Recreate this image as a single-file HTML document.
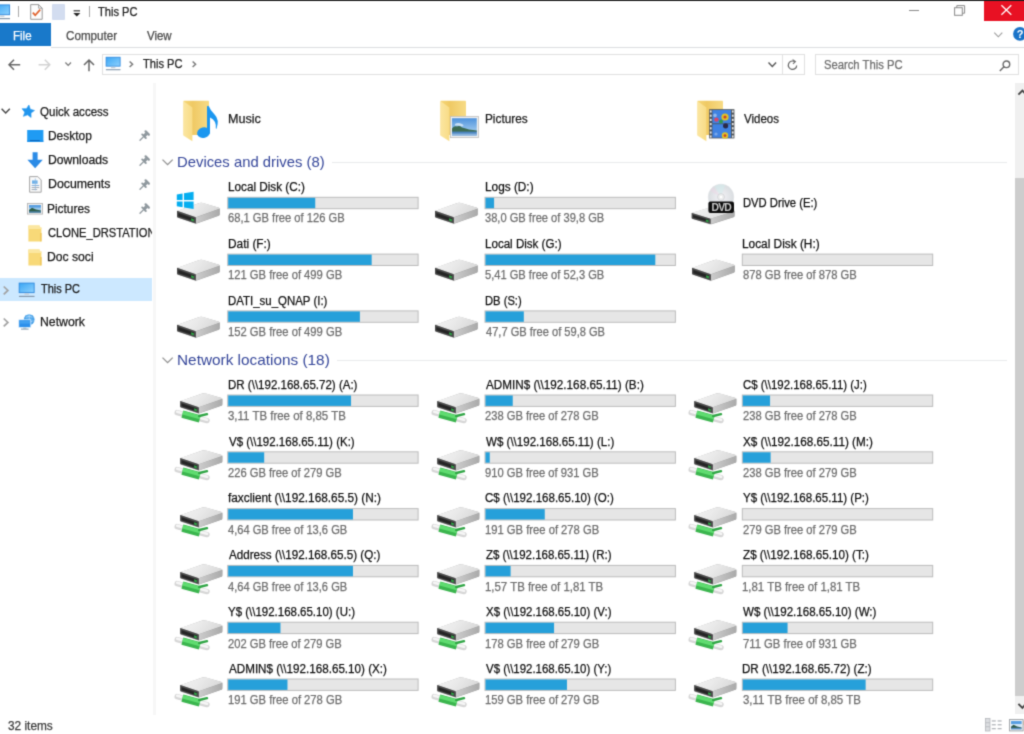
<!DOCTYPE html>
<html><head><meta charset="utf-8"><title>This PC</title>
<style>
html,body{margin:0;padding:0;background:#fff;}
body{position:relative;width:1024px;height:734px;overflow:hidden;font-family:"Liberation Sans",sans-serif;}
#root{filter:url(#pgblur);position:absolute;left:-10px;top:-10px;width:1044px;height:754px;background:#fff;}
#in{position:absolute;left:10px;top:10px;width:1024px;height:734px;}
.t{-webkit-text-stroke:0.25px;position:absolute;white-space:pre;line-height:1;transform-origin:0 50%;font-family:"Liberation Sans",sans-serif;}
.r{position:absolute;}
.ic{position:absolute;overflow:visible;}
.bar{position:absolute;width:189.4px;height:10.4px;border:1px solid #bcbcbc;background:#e6e6e6;}
.bar i{display:block;height:100%;background:#26a0da;}

</style></head>
<body>
<svg width="0" height="0" style="position:absolute">
<defs>
<filter id="pgblur" x="0" y="0" width="100%" height="100%" color-interpolation-filters="sRGB"><feConvolveMatrix order="3" kernelMatrix="0.0256 0.1088 0.0256 0.1088 0.4624 0.1088 0.0256 0.1088 0.0256" divisor="1" edgeMode="duplicate" preserveAlpha="true"/></filter>
<linearGradient id="gScr" x1="0" y1="0" x2="1" y2="1"><stop offset="0" stop-color="#3aa6f4"/><stop offset="1" stop-color="#8ed1fd"/></linearGradient>
<linearGradient id="gTop" x1="0" y1="0" x2="1" y2="0.3"><stop offset="0" stop-color="#f3f3f3"/><stop offset="0.5" stop-color="#eaeaea"/><stop offset="1" stop-color="#dadada"/></linearGradient>
<linearGradient id="gSide" x1="0" y1="0" x2="1" y2="0"><stop offset="0" stop-color="#cccccc"/><stop offset="1" stop-color="#aaaaaa"/></linearGradient>
<linearGradient id="gFoldB" x1="0" y1="0" x2="1" y2="0"><stop offset="0" stop-color="#f6d777"/><stop offset="0.36" stop-color="#efc964"/><stop offset="1" stop-color="#f7db85"/></linearGradient>
<linearGradient id="gFoldF" x1="0" y1="0" x2="1" y2="0"><stop offset="0" stop-color="#fbe6a2"/><stop offset="1" stop-color="#f8dc86"/></linearGradient>
<linearGradient id="gSky" x1="0" y1="0" x2="0" y2="1"><stop offset="0" stop-color="#4f93dc"/><stop offset="1" stop-color="#b5d8f3"/></linearGradient>
<radialGradient id="gDisc" cx="0.5" cy="0.5" r="0.5"><stop offset="0" stop-color="#f4f4f4"/><stop offset="0.22" stop-color="#d8d8dc"/><stop offset="0.3" stop-color="#ececf0"/><stop offset="1" stop-color="#d9dde0"/></radialGradient>

<symbol id="pc" viewBox="0 0 18 16" overflow="visible">
  <rect x="1.2" y="0.9" width="15.4" height="9.8" fill="url(#gScr)" stroke="#2b86dc" stroke-width="0.9"/>
  <rect x="6.6" y="11.4" width="4.8" height="1.5" fill="#c3ccd6"/>
  <rect x="1" y="14" width="16" height="1.2" fill="#8296aa"/>
</symbol>
<symbol id="qcheck" viewBox="0 0 13 16" overflow="visible">
  <path d="M0.7 0.6H8.6L12.2 4.2V15.3H0.7z" fill="#fdfdfd" stroke="#8d8d8d" stroke-width="0.9"/>
  <path d="M8.6 0.6V4.2H12.2" fill="none" stroke="#8d8d8d" stroke-width="0.8"/>
  <path d="M2.8 8.6L5.2 11.2L10.2 5.6" fill="none" stroke="#e0632e" stroke-width="1.7"/>
</symbol>
<symbol id="star" viewBox="0 0 14 13" overflow="visible">
  <path d="M7.92 0.06L9.29 4.23L13.50 5.45L9.97 8.05L10.10 12.43L6.54 9.87L2.42 11.35L3.75 7.17L1.07 3.71L5.45 3.69z" fill="#2196ee" stroke="#2196ee" stroke-width="0.6" stroke-linejoin="round"/>
</symbol>
<symbol id="desk" viewBox="0 0 17 12" overflow="visible">
  <rect x="0.2" y="0" width="16.2" height="11.8" fill="#1f9bf3"/>
  <rect x="0.2" y="10.6" width="16.2" height="1.2" fill="#1a8be6"/>
  <rect x="3" y="10" width="9.8" height="0.9" fill="#0c63b6"/>
</symbol>
<symbol id="dl" viewBox="0 0 17 17" overflow="visible">
  <path d="M5.6 0.2H10.6V7.8H15.8L8.1 16.2L0.4 7.8H5.6z" fill="#2b8be6"/>
</symbol>
<symbol id="docs" viewBox="0 0 13 17" overflow="visible">
  <path d="M0.6 0.6H8.8L12.2 4V16.2H0.6z" fill="#fafafa" stroke="#9a9a9a" stroke-width="0.9"/>
  <rect x="3" y="4.4" width="5.6" height="3.4" fill="#6eb1ea"/>
  <rect x="2.6" y="9" width="7.6" height="0.9" fill="#7aa7d6"/>
  <rect x="2.6" y="11" width="7.6" height="0.9" fill="#9aa4b0"/>
  <rect x="2.6" y="13" width="5.6" height="0.9" fill="#9aa4b0"/>
  <rect x="5.8" y="2.4" width="1" height="12" fill="#8fb7de" opacity="0.7"/>
</symbol>
<symbol id="pics" viewBox="0 0 16 12" overflow="visible">
  <rect x="0.5" y="0.5" width="15" height="10.6" fill="#f2f2f2" stroke="#b4b4b4" stroke-width="0.9"/>
  <rect x="2" y="2" width="12" height="7.6" fill="#9cc9ee"/>
  <rect x="2" y="2" width="12" height="2.6" fill="#5a9fe0"/>
  <path d="M2 7L5 4.8L9 6.6L14 7.4V9.6H2z" fill="#2e5d47"/>
  <rect x="2" y="8.4" width="12" height="1.2" fill="#4f86b8"/>
</symbol>
<symbol id="fold" viewBox="0 0 14 17" overflow="visible">
  <path d="M0.4 0.6H11.6V2.6H13.4V16.4H0.4z" fill="#f8d978"/>
  <path d="M0.4 0.6H11.6V2.6H13.4V4H0.4z" fill="#fbe7a1"/>
  <rect x="12.2" y="8" width="1.4" height="8.4" fill="#eec55a"/>
</symbol>
<symbol id="pin" viewBox="0 0 11 11" overflow="visible">
  <g stroke="#8f989e" fill="none" stroke-linecap="round">
  <path d="M6.6 1.4L9.8 4.6" stroke-width="2.3"/>
  <path d="M7.6 3.6L5 6.2" stroke-width="3.2" stroke-linecap="butt"/>
  <path d="M3.2 4.4L6.8 8" stroke-width="1.9"/>
  <path d="M4.6 6.6L1 10.2" stroke-width="1.3"/>
  </g>
</symbol>
<symbol id="netw" viewBox="0 0 17 16" overflow="visible">
  <circle cx="11.2" cy="5.6" r="5.4" fill="#55acef"/>
  <path d="M7 3.4Q11 1.4 15.6 3.4M6.4 7Q11 9.2 16.4 6.6M11.2 0.4V11" stroke="#bfe0fa" stroke-width="0.7" fill="none"/>
  <path d="M8 1.2Q5.4 5.6 8 10.4M14.2 1.2Q16.8 5.6 14.2 10" stroke="#3b8fd8" stroke-width="0.6" fill="none"/>
  <rect x="0.8" y="5.8" width="12" height="7.6" fill="#2d90ec" stroke="#e4f2fd" stroke-width="0.7"/>
  <rect x="1.6" y="6.6" width="10.4" height="3" fill="#4aa6f4" opacity="0.7"/>
  <rect x="5.2" y="13.6" width="3.2" height="1" fill="#9fb4c6"/>
  <rect x="3" y="14.6" width="7.6" height="1" fill="#8298ad"/>
</symbol>

<symbol id="bigfold" viewBox="0 0 27 42" overflow="visible">
  <path d="M0.6 0.7H25.2Q26 0.7 26 1.5V35H0.6z" fill="url(#gFoldB)"/>
  <path d="M0.3 1L9.4 7.4V41.2L0.3 35.6z" fill="url(#gFoldF)"/>
  
</symbol>
<symbol id="note" viewBox="0 0 20 36" overflow="visible">
  <ellipse cx="3.6" cy="28.6" rx="6.6" ry="5.2" transform="rotate(-14 3.6 28.6)" fill="#1b97f0"/>
  <path d="M7 2.4Q8.2 1.2 9 2.6Q10.2 6.4 14.6 10.4Q19.6 15.4 16.6 24.4Q16.2 25.4 15.8 24.2Q16.6 16.4 10 13.4V29.4H7z" fill="#1b97f0"/>
</symbol>
<symbol id="photo" viewBox="0 0 29 22" overflow="visible">
  <rect x="0.4" y="0.4" width="28" height="21.2" fill="#f1f1f1" stroke="#bdbdbd" stroke-width="0.8"/>
  <rect x="2" y="2.2" width="24.8" height="17.2" fill="url(#gSky)"/>
  <path d="M2 12.4Q4 9.6 7 10.4Q9.6 9.4 12 11.4Q16 12.4 19 13.4Q23 13.6 26.8 14.6V16H2z" fill="#3c6b52"/>
  <path d="M5 8Q8 6 12 8Q15 9.6 12 10.4Q9 9.4 5 9.6z" fill="#e6f1fa" opacity="0.75"/>
  <rect x="2" y="15.6" width="24.8" height="3.8" fill="#4d86c2"/>
  <rect x="2" y="17.6" width="24.8" height="1.8" fill="#8ab4dc"/>
</symbol>
<symbol id="film" viewBox="0 0 26 30" overflow="visible">
  <rect x="0.2" y="0.2" width="25.2" height="29.2" fill="#4c5258"/>
  <rect x="3.4" y="1" width="18.6" height="13.4" fill="#3f82e2"/>
  <rect x="3.4" y="15.2" width="18.6" height="13.4" fill="#3f82e2"/>
  <g fill="#e8e8e8"><rect x="0.9" y="1.4" width="1.7" height="2.2"/><rect x="0.9" y="5.6" width="1.7" height="2.2"/><rect x="0.9" y="9.8" width="1.7" height="2.2"/><rect x="0.9" y="14" width="1.7" height="2.2"/><rect x="0.9" y="18.2" width="1.7" height="2.2"/><rect x="0.9" y="22.4" width="1.7" height="2.2"/><rect x="0.9" y="26.4" width="1.7" height="2.2"/>
  <rect x="22.9" y="1.4" width="1.7" height="2.2"/><rect x="22.9" y="5.6" width="1.7" height="2.2"/><rect x="22.9" y="9.8" width="1.7" height="2.2"/><rect x="22.9" y="14" width="1.7" height="2.2"/><rect x="22.9" y="18.2" width="1.7" height="2.2"/><rect x="22.9" y="22.4" width="1.7" height="2.2"/><rect x="22.9" y="26.4" width="1.7" height="2.2"/></g>
  <circle cx="16" cy="8" r="3.6" fill="#e2c324"/><circle cx="16" cy="8" r="1.6" fill="#c8402a"/>
  <circle cx="7.4" cy="10.6" r="2.2" fill="#d8486a"/><circle cx="12" cy="12.4" r="2" fill="#2f9a4e"/>
  <circle cx="16.6" cy="16.8" r="2.6" fill="#2a2a48"/><circle cx="16" cy="26.4" r="3.2" fill="#e2c324"/><circle cx="16" cy="26.6" r="1.4" fill="#c8402a"/>
  <circle cx="6" cy="6.4" r="1.8" fill="#8fb8ee"/><circle cx="7" cy="25" r="1.6" fill="#79a8ea"/>
</symbol>

<symbol id="hdd" viewBox="0 0 45 23" overflow="visible" preserveAspectRatio="none">
  <path d="M1.1 9.3L23.6 1.1Q25.2 0.5 26.8 1L43.2 6Q44.2 6.4 44.1 7.4L44 13Q44 13.8 43.1 14.2L21 22.3Q20 22.7 19 22.3L1.9 16.3Q1 16 1 15z" fill="#a2a2a2"/>
  <path d="M1.2 9L23.6 1Q25.2 0.4 26.8 0.9L43.4 6Q44.4 6.5 43.4 7L20.6 15.6Q19.9 15.8 19.2 15.6z" fill="url(#gTop)"/>
  <path d="M20 15.9L44 7.1V12.6Q44 13.4 43.1 13.8L20 22.2z" fill="url(#gSide)"/>
  <path d="M1 9.1L19.2 15.6Q20 15.9 20 16.8V22.2L1.8 15.9Q1 15.6 1 14.7z" fill="#4a4a4a"/>
  <path d="M2.4 11.4L18.2 17V20.2L2.4 14.6z" fill="#242424"/>
  <path d="M15.2 16.8L18 17.8V20.2L15.2 19.2z" fill="#2fa446"/>
</symbol>
<symbol id="win" viewBox="0 0 19 19" overflow="visible">
  <path d="M0.8 3.6L6.6 2.6V9H0.8z M8 2.3L17.6 0.8V9H8z M0.8 10.4H6.6V16.2L0.8 15.2z M8 10.4H17.6V18L8 16.4z" fill="#05aef0"/>
</symbol>
<symbol id="dvd" viewBox="0 0 46 43" overflow="visible">
  <g transform="translate(-0.3 22.2) scale(0.995 0.85)"><use href="#hdd" width="45" height="23"/></g>
  <circle cx="30" cy="14" r="12.8" fill="url(#gDisc)" stroke="#dfe3e6" stroke-width="0.6"/>
  <path d="M30 14L24 3.2A12.4 12.4 0 0 1 34 2.2z" fill="#d4ecec" opacity="0.55"/>
  <path d="M30 14L19 8A12.4 12.4 0 0 1 22 4.2z" fill="#ecd8e6" opacity="0.5"/>
  <circle cx="30" cy="14" r="3.4" fill="#eeeeee" stroke="#cfd3d6" stroke-width="0.8"/>
  <circle cx="30" cy="14" r="1.3" fill="#fff"/>
  <rect x="17.4" y="18.4" width="25.6" height="11.6" rx="2" fill="#0d0d0d"/>
  <text x="30.2" y="27.9" text-anchor="middle" font-family="Liberation Sans" font-weight="bold" font-size="10.4" letter-spacing="-0.9" fill="#c9c9c9">DVD</text>
</symbol>
<symbol id="net" viewBox="0 0 50 34" overflow="visible">
  <path d="M3.2 20.6L33 28.6" stroke="#d6d6d6" stroke-width="5.4" stroke-linecap="round" fill="none"/>
  <path d="M3.2 19.8L33 27.8" stroke="#f6f6f6" stroke-width="2.6" stroke-linecap="round" fill="none"/>
  <path d="M8.4 22.2L25.8 26.8" stroke="#3bb54e" stroke-width="7.6" fill="none"/>
  <path d="M8.8 20.8L26.2 25.4" stroke="#5fdc70" stroke-width="3.6" fill="none"/>
  <path d="M25.2 24L33 22.2" stroke="#2fa544" stroke-width="2.4" stroke-linecap="round" fill="none"/>
  <g transform="translate(5.2 0.5) scale(0.98 0.935)"><use href="#hdd" width="45" height="23"/></g>
</symbol>
</defs>
</svg>

<div id="root"><div id="in">
<svg class="ic" style="left:0;top:0" width="1024" height="734">
<rect x="227.20" y="196.80" width="191.4" height="12.4" fill="#bcbcbc"/><rect x="228.20" y="197.80" width="189.40" height="10.40" fill="#e6e6e6"/><rect x="228.20" y="197.80" width="87.03" height="10.40" fill="#26a0da"/>
<rect x="484.50" y="196.80" width="191.4" height="12.4" fill="#bcbcbc"/><rect x="485.50" y="197.80" width="189.40" height="10.40" fill="#e6e6e6"/><rect x="485.50" y="197.80" width="8.57" height="10.40" fill="#26a0da"/>
<rect x="227.20" y="253.60" width="191.4" height="12.4" fill="#bcbcbc"/><rect x="228.20" y="254.60" width="189.40" height="10.40" fill="#e6e6e6"/><rect x="228.20" y="254.60" width="143.47" height="10.40" fill="#26a0da"/>
<rect x="484.50" y="253.60" width="191.4" height="12.4" fill="#bcbcbc"/><rect x="485.50" y="254.60" width="189.40" height="10.40" fill="#e6e6e6"/><rect x="485.50" y="254.60" width="169.81" height="10.40" fill="#26a0da"/>
<rect x="741.80" y="253.60" width="191.4" height="12.4" fill="#bcbcbc"/><rect x="742.80" y="254.60" width="189.40" height="10.40" fill="#e6e6e6"/>
<rect x="227.20" y="310.40" width="191.4" height="12.4" fill="#bcbcbc"/><rect x="228.20" y="311.40" width="189.40" height="10.40" fill="#e6e6e6"/><rect x="228.20" y="311.40" width="131.71" height="10.40" fill="#26a0da"/>
<rect x="484.50" y="310.40" width="191.4" height="12.4" fill="#bcbcbc"/><rect x="485.50" y="311.40" width="189.40" height="10.40" fill="#e6e6e6"/><rect x="485.50" y="311.40" width="38.32" height="10.40" fill="#26a0da"/>
<rect x="227.20" y="394.50" width="191.4" height="12.4" fill="#bcbcbc"/><rect x="228.20" y="395.50" width="189.40" height="10.40" fill="#e6e6e6"/><rect x="228.20" y="395.50" width="122.84" height="10.40" fill="#26a0da"/>
<rect x="484.50" y="394.50" width="191.4" height="12.4" fill="#bcbcbc"/><rect x="485.50" y="395.50" width="189.40" height="10.40" fill="#e6e6e6"/><rect x="485.50" y="395.50" width="27.25" height="10.40" fill="#26a0da"/>
<rect x="741.80" y="394.50" width="191.4" height="12.4" fill="#bcbcbc"/><rect x="742.80" y="395.50" width="189.40" height="10.40" fill="#e6e6e6"/><rect x="742.80" y="395.50" width="27.25" height="10.40" fill="#26a0da"/>
<rect x="227.20" y="451.30" width="191.4" height="12.4" fill="#bcbcbc"/><rect x="228.20" y="452.30" width="189.40" height="10.40" fill="#e6e6e6"/><rect x="228.20" y="452.30" width="35.98" height="10.40" fill="#26a0da"/>
<rect x="484.50" y="451.30" width="191.4" height="12.4" fill="#bcbcbc"/><rect x="485.50" y="452.30" width="189.40" height="10.40" fill="#e6e6e6"/><rect x="485.50" y="452.30" width="4.27" height="10.40" fill="#26a0da"/>
<rect x="741.80" y="451.30" width="191.4" height="12.4" fill="#bcbcbc"/><rect x="742.80" y="452.30" width="189.40" height="10.40" fill="#e6e6e6"/><rect x="742.80" y="452.30" width="27.83" height="10.40" fill="#26a0da"/>
<rect x="227.20" y="508.10" width="191.4" height="12.4" fill="#bcbcbc"/><rect x="228.20" y="509.10" width="189.40" height="10.40" fill="#e6e6e6"/><rect x="228.20" y="509.10" width="124.78" height="10.40" fill="#26a0da"/>
<rect x="484.50" y="508.10" width="191.4" height="12.4" fill="#bcbcbc"/><rect x="485.50" y="509.10" width="189.40" height="10.40" fill="#e6e6e6"/><rect x="485.50" y="509.10" width="59.27" height="10.40" fill="#26a0da"/>
<rect x="741.80" y="508.10" width="191.4" height="12.4" fill="#bcbcbc"/><rect x="742.80" y="509.10" width="189.40" height="10.40" fill="#e6e6e6"/>
<rect x="227.20" y="564.90" width="191.4" height="12.4" fill="#bcbcbc"/><rect x="228.20" y="565.90" width="189.40" height="10.40" fill="#e6e6e6"/><rect x="228.20" y="565.90" width="124.78" height="10.40" fill="#26a0da"/>
<rect x="484.50" y="564.90" width="191.4" height="12.4" fill="#bcbcbc"/><rect x="485.50" y="565.90" width="189.40" height="10.40" fill="#e6e6e6"/><rect x="485.50" y="565.90" width="25.11" height="10.40" fill="#26a0da"/>
<rect x="741.80" y="564.90" width="191.4" height="12.4" fill="#bcbcbc"/><rect x="742.80" y="565.90" width="189.40" height="10.40" fill="#e6e6e6"/>
<rect x="227.20" y="621.70" width="191.4" height="12.4" fill="#bcbcbc"/><rect x="228.20" y="622.70" width="189.40" height="10.40" fill="#e6e6e6"/><rect x="228.20" y="622.70" width="52.27" height="10.40" fill="#26a0da"/>
<rect x="484.50" y="621.70" width="191.4" height="12.4" fill="#bcbcbc"/><rect x="485.50" y="622.70" width="189.40" height="10.40" fill="#e6e6e6"/><rect x="485.50" y="622.70" width="68.56" height="10.40" fill="#26a0da"/>
<rect x="741.80" y="621.70" width="191.4" height="12.4" fill="#bcbcbc"/><rect x="742.80" y="622.70" width="189.40" height="10.40" fill="#e6e6e6"/><rect x="742.80" y="622.70" width="44.76" height="10.40" fill="#26a0da"/>
<rect x="227.20" y="678.50" width="191.4" height="12.4" fill="#bcbcbc"/><rect x="228.20" y="679.50" width="189.40" height="10.40" fill="#e6e6e6"/><rect x="228.20" y="679.50" width="59.27" height="10.40" fill="#26a0da"/>
<rect x="484.50" y="678.50" width="191.4" height="12.4" fill="#bcbcbc"/><rect x="485.50" y="679.50" width="189.40" height="10.40" fill="#e6e6e6"/><rect x="485.50" y="679.50" width="81.46" height="10.40" fill="#26a0da"/>
<rect x="741.80" y="678.50" width="191.4" height="12.4" fill="#bcbcbc"/><rect x="742.80" y="679.50" width="189.40" height="10.40" fill="#e6e6e6"/><rect x="742.80" y="679.50" width="122.84" height="10.40" fill="#26a0da"/>
</svg>
<div class="r" style="left:-10px;top:-10px;width:1044px;height:11.2px;background:#1b1b1b"></div>
<svg class="ic" style="left:-7.50px;top:3.50px" width="18" height="16"><use href="#pc"/></svg>
<div class="r" style="left:17.8px;top:5.7px;width:1px;height:11px;background:#a8a8a8"></div>
<svg class="ic" style="left:29.50px;top:3.80px" width="13" height="16"><use href="#qcheck"/></svg>
<div class="r" style="left:52px;top:4.4px;width:12.7px;height:15.3px;background:#d3ddf0;border-radius:1px"></div>
<svg class="ic" style="left:73px;top:9.5px" width="8" height="7"><rect x="0.6" y="0.3" width="6.4" height="1.1" fill="#222"/><path d="M0.3 2.9h7L3.8 6.6z" fill="#222"/></svg>
<div class="r" style="left:88.5px;top:5.7px;width:1px;height:11px;background:#a8a8a8"></div>
<div class="r" style="left:908.8px;top:10px;width:10.6px;height:1px;background:#8a8a8a"></div>
<svg class="ic" style="left:953.8px;top:4.6px" width="12" height="11" fill="none" stroke="#888" stroke-width="1"><path d="M2.8 2.6V0.6h7.8v7.6H8.4"/><rect x="0.6" y="2.7" width="7.7" height="7.6"/></svg>
<div class="r" style="left:984px;top:1px;width:50px;height:19.8px;background:#e81123"></div>
<svg class="ic" style="left:1001px;top:5px" width="11" height="10" stroke="#fff" stroke-width="1.25"><path d="M0.4 0.2L10.3 9.8M10.3 0.2L0.4 9.8"/></svg>
<div class="r" style="left:-10px;top:23.4px;width:60.8px;height:23px;background:#1979ca"></div>
<div class="r" style="left:51px;top:46.6px;width:983px;height:1px;background:#dcdde0"></div>
<svg class="ic" style="left:994px;top:31.5px" width="9" height="6" fill="none" stroke="#9a9a9a" stroke-width="1.1"><path d="M0.3 0.6L4.3 4.8L8.3 0.6"/></svg>
<svg class="ic" style="left:1013px;top:27.4px" width="14" height="14"><circle cx="7" cy="6.9" r="6.9" fill="#1a73c8"/><text x="7" y="11" text-anchor="middle" font-family="Liberation Sans" font-weight="bold" font-size="11" fill="#fff">?</text></svg>
<svg class="ic" style="left:7.5px;top:59px" width="13" height="12" fill="none" stroke="#666" stroke-width="1.5"><path d="M12.2 5.8H1.2M6 0.8L1 5.8L6 10.8"/></svg>
<svg class="ic" style="left:37.5px;top:59px" width="13" height="12" fill="none" stroke="#d2d2d2" stroke-width="1.5"><path d="M0.6 5.8H11.6M6.8 0.8L11.8 5.8L6.8 10.8"/></svg>
<svg class="ic" style="left:64.5px;top:62px" width="7" height="5" fill="none" stroke="#777" stroke-width="1.2"><path d="M0.4 0.5L3.2 3.3L6 0.5"/></svg>
<svg class="ic" style="left:82.5px;top:58.6px" width="12" height="13" fill="none" stroke="#666" stroke-width="1.5"><path d="M6 12.2V1.2M1 6L6 1L11 6"/></svg>
<div class="r" style="left:101.5px;top:54px;width:703px;height:21.2px;border:1px solid #e0e0e0;box-sizing:border-box"></div>
<svg class="ic" style="left:104.50px;top:56.40px" width="16.4" height="15.4"><use href="#pc"/></svg>
<svg class="ic" style="left:128.5px;top:61px" width="5" height="7" fill="none" stroke="#777" stroke-width="1.4"><path d="M0.6 0.5L3.6 3.2L0.6 5.9"/></svg>
<svg class="ic" style="left:192px;top:61px" width="5" height="7" fill="none" stroke="#777" stroke-width="1.4"><path d="M0.6 0.5L3.6 3.2L0.6 5.9"/></svg>
<svg class="ic" style="left:767.6px;top:62.2px" width="9" height="6" fill="none" stroke="#555" stroke-width="1.4"><path d="M0.5 0.6L4.3 4.4L8.1 0.6"/></svg>
<div class="r" style="left:782px;top:54.5px;width:1px;height:19.6px;background:#e2e2e2"></div>
<svg class="ic" style="left:787px;top:58.6px" width="12" height="12" fill="none" stroke="#666" stroke-width="1.2"><path d="M7.6 2.6A4.2 4.2 0 1 0 9.7 6.4"/><path d="M5.6 0.6L8.4 2.6L6 4.8" stroke-width="1.1"/></svg>
<div class="r" style="left:815px;top:54px;width:203.6px;height:21.2px;border:1px solid #e0e0e0;box-sizing:border-box"></div>
<svg class="ic" style="left:998.5px;top:60px" width="12" height="12" fill="none" stroke="#666" stroke-width="1.4"><circle cx="7.4" cy="4.3" r="3.3"/><path d="M5.2 6.6L0.8 11"/></svg>
<div class="r" style="left:153.2px;top:83px;width:2.4px;height:632px;background:#f7f7f7;z-index:6"></div>
<svg class="ic" style="left:1.4px;top:108.3px" width="10" height="7" fill="none" stroke="#444" stroke-width="1.4"><path d="M0.6 0.7L4.7 4.9L8.8 0.7"/></svg>
<svg class="ic" style="left:21.40px;top:104.70px" width="14" height="13"><use href="#star"/></svg>
<svg class="ic" style="left:26.60px;top:129.80px" width="17" height="12"><use href="#desk"/></svg>
<svg class="ic" style="left:26.50px;top:152.00px" width="17" height="17"><use href="#dl"/></svg>
<svg class="ic" style="left:28.60px;top:175.80px" width="13" height="17"><use href="#docs"/></svg>
<svg class="ic" style="left:27.00px;top:203.00px" width="16" height="12"><use href="#pics"/></svg>
<svg class="ic" style="left:28.40px;top:224.50px" width="14" height="17"><use href="#fold"/></svg>
<div class="r" style="left:152.3px;top:224px;width:8px;height:18px;background:#fff;z-index:5"></div>
<svg class="ic" style="left:28.40px;top:248.77px" width="14" height="17"><use href="#fold"/></svg>
<svg class="ic" style="left:138.60px;top:130.40px" width="11" height="11"><use href="#pin"/></svg>
<svg class="ic" style="left:138.60px;top:154.67px" width="11" height="11"><use href="#pin"/></svg>
<svg class="ic" style="left:138.60px;top:178.94px" width="11" height="11"><use href="#pin"/></svg>
<svg class="ic" style="left:138.60px;top:203.21px" width="11" height="11"><use href="#pin"/></svg>
<div class="r" style="left:-10px;top:277.8px;width:162.3px;height:23.5px;background:#cce8ff"></div>
<svg class="ic" style="left:2.9px;top:286px" width="7" height="9" fill="none" stroke="#a2a2a2" stroke-width="1.7"><path d="M0.7 0.5L4.9 4.4L0.7 8.3"/></svg>
<svg class="ic" style="left:18.20px;top:282.30px" width="17.5" height="16"><use href="#pc"/></svg>
<svg class="ic" style="left:2.9px;top:318.4px" width="7" height="9" fill="none" stroke="#a2a2a2" stroke-width="1.7"><path d="M0.7 0.5L4.9 4.4L0.7 8.3"/></svg>
<svg class="ic" style="left:18.20px;top:314.00px" width="17" height="16"><use href="#netw"/></svg>
<svg class="ic" style="left:182.50px;top:99.50px" width="27" height="42"><use href="#bigfold"/></svg>
<svg class="ic" style="left:439.70px;top:99.50px" width="27" height="42"><use href="#bigfold"/></svg>
<svg class="ic" style="left:696.90px;top:99.50px" width="27" height="42"><use href="#bigfold"/></svg>
<svg class="ic" style="left:200.00px;top:104.00px" width="20" height="36"><use href="#note"/></svg>
<svg class="ic" style="left:450.00px;top:116.00px" width="29" height="22"><use href="#photo"/></svg>
<svg class="ic" style="left:709.00px;top:109.00px" width="26" height="30"><use href="#film"/></svg>
<svg class="ic" style="left:162.2px;top:159.00px" width="12" height="7" fill="none" stroke="#909090" stroke-width="1.3"><path d="M0.5 0.6L5.6 5.7L10.7 0.6"/></svg>
<div class="r" style="left:332px;top:162.40px;width:675px;height:1px;background:#e9eaec"></div>
<svg class="ic" style="left:162.2px;top:356.70px" width="12" height="7" fill="none" stroke="#909090" stroke-width="1.3"><path d="M0.5 0.6L5.6 5.7L10.7 0.6"/></svg>
<div class="r" style="left:337px;top:360.10px;width:670px;height:1px;background:#e9eaec"></div>
<div class="r" style="left:1015.3px;top:83px;width:18.7px;height:631px;background:#f0f0f0"></div>
<div class="r" style="left:1015.3px;top:178.2px;width:18.7px;height:517.8px;background:#cdcdcd"></div>
<svg class="ic" style="left:1018.4px;top:89.2px" width="8" height="7" fill="none" stroke="#444" stroke-width="1.9"><path d="M0.4 5.6L4.4 1.6L8.4 5.6"/></svg>
<svg class="ic" style="left:1018.4px;top:703px" width="8" height="7" fill="none" stroke="#444" stroke-width="1.9"><path d="M0.4 0.8L4.4 4.8L8.4 0.8"/></svg>
<svg class="ic" style="left:985.4px;top:718.3px" width="18" height="14" fill="#b2b5ba"><rect x="0.4" y="0.4" width="4.6" height="12.6" fill="#dcdee1" stroke="#b4b7bb" stroke-width="0.8"/><rect x="0.4" y="4.4" width="4.6" height="0.8" fill="#b4b7bb"/><rect x="0.4" y="8.4" width="4.6" height="0.8" fill="#b4b7bb"/><rect x="6.8" y="2.3" width="4" height="1.3"/><rect x="12.6" y="2.3" width="4" height="1.3"/><rect x="6.8" y="6.1" width="4" height="1.3"/><rect x="12.6" y="6.1" width="4" height="1.3"/><rect x="6.8" y="10" width="4" height="1.3"/><rect x="12.6" y="10" width="4" height="1.3"/></svg>
<svg class="ic" style="left:1008.6px;top:719px" width="16" height="13"><rect x="0.5" y="0.5" width="13.6" height="11.4" fill="#f4f6f8" stroke="#a4a8ac" stroke-width="1"/><rect x="2" y="2" width="10.6" height="8.4" fill="#cfe4f6"/><rect x="2" y="2" width="10.6" height="3" fill="#5a9fe2"/><path d="M2 7.8L4.6 5.8L8 7.4L12.6 8.4V9.2H2z" fill="#2f5a4a"/><rect x="2" y="8.8" width="10.6" height="1.6" fill="#5b8fc4"/><rect x="14.6" y="2" width="1.4" height="4" fill="#f0a868"/><rect x="14.2" y="0.5" width="0.9" height="11.4" fill="#b8bcc0"/></svg>
<svg class="ic" style="left:176.20px;top:202.40px" width="44.7" height="22.3"><use href="#hdd"/></svg>
<svg class="ic" style="left:176.00px;top:190.90px" width="19" height="19"><use href="#win"/></svg>
<svg class="ic" style="left:433.50px;top:202.40px" width="44.7" height="22.3"><use href="#hdd"/></svg>
<svg class="ic" style="left:691.30px;top:183.00px" width="46" height="43"><use href="#dvd"/></svg>
<svg class="ic" style="left:176.20px;top:259.20px" width="44.7" height="22.3"><use href="#hdd"/></svg>
<svg class="ic" style="left:433.50px;top:259.20px" width="44.7" height="22.3"><use href="#hdd"/></svg>
<svg class="ic" style="left:690.80px;top:259.20px" width="44.7" height="22.3"><use href="#hdd"/></svg>
<svg class="ic" style="left:176.20px;top:316.00px" width="44.7" height="22.3"><use href="#hdd"/></svg>
<svg class="ic" style="left:433.50px;top:316.00px" width="44.7" height="22.3"><use href="#hdd"/></svg>
<svg class="ic" style="left:173.50px;top:392.20px" width="50" height="34"><use href="#net"/></svg>
<svg class="ic" style="left:430.80px;top:392.20px" width="50" height="34"><use href="#net"/></svg>
<svg class="ic" style="left:688.10px;top:392.20px" width="50" height="34"><use href="#net"/></svg>
<svg class="ic" style="left:173.50px;top:449.00px" width="50" height="34"><use href="#net"/></svg>
<svg class="ic" style="left:430.80px;top:449.00px" width="50" height="34"><use href="#net"/></svg>
<svg class="ic" style="left:688.10px;top:449.00px" width="50" height="34"><use href="#net"/></svg>
<svg class="ic" style="left:173.50px;top:505.80px" width="50" height="34"><use href="#net"/></svg>
<svg class="ic" style="left:430.80px;top:505.80px" width="50" height="34"><use href="#net"/></svg>
<svg class="ic" style="left:688.10px;top:505.80px" width="50" height="34"><use href="#net"/></svg>
<svg class="ic" style="left:173.50px;top:562.60px" width="50" height="34"><use href="#net"/></svg>
<svg class="ic" style="left:430.80px;top:562.60px" width="50" height="34"><use href="#net"/></svg>
<svg class="ic" style="left:688.10px;top:562.60px" width="50" height="34"><use href="#net"/></svg>
<svg class="ic" style="left:173.50px;top:619.40px" width="50" height="34"><use href="#net"/></svg>
<svg class="ic" style="left:430.80px;top:619.40px" width="50" height="34"><use href="#net"/></svg>
<svg class="ic" style="left:688.10px;top:619.40px" width="50" height="34"><use href="#net"/></svg>
<svg class="ic" style="left:173.50px;top:676.20px" width="50" height="34"><use href="#net"/></svg>
<svg class="ic" style="left:430.80px;top:676.20px" width="50" height="34"><use href="#net"/></svg>
<svg class="ic" style="left:688.10px;top:676.20px" width="50" height="34"><use href="#net"/></svg>
<span class="t" style="left:97.57px;top:6px;font-size:12px;color:#222;transform:scaleX(0.9238);">This PC</span>
<span class="t" style="left:13.24px;top:30px;font-size:12px;color:#fff;transform:scaleX(0.9611);">File</span>
<span class="t" style="left:65.51px;top:30px;font-size:12px;color:#4a4a4a;transform:scaleX(0.9712);">Computer</span>
<span class="t" style="left:146.80px;top:30px;font-size:12px;color:#4a4a4a;transform:scaleX(0.9553);">View</span>
<span class="t" style="left:143.07px;top:58px;font-size:12px;color:#222;transform:scaleX(0.9262);">This PC</span>
<span class="t" style="left:824.03px;top:59px;font-size:12px;color:#6d6d6d;transform:scaleX(0.9366);">Search This PC</span>
<span class="t" style="left:39.82px;top:106px;font-size:12px;color:#1a1a1a;transform:scaleX(0.9617);">Quick access</span>
<span class="t" style="left:47.76px;top:130px;font-size:12px;color:#1a1a1a;transform:scaleX(0.9941);">Desktop</span>
<span class="t" style="left:47.74px;top:154px;font-size:12px;color:#1a1a1a;transform:scaleX(1.0129);">Downloads</span>
<span class="t" style="left:47.72px;top:178px;font-size:12px;color:#1a1a1a;transform:scaleX(1.0278);">Documents</span>
<span class="t" style="left:47.41px;top:203px;font-size:12px;color:#1a1a1a;transform:scaleX(0.9905);">Pictures</span>
<span class="t" style="left:47.93px;top:227px;font-size:12px;color:#1a1a1a;transform:scaleX(0.9300);">CLONE_DRSTATION</span>
<span class="t" style="left:47.39px;top:251px;font-size:12px;color:#1a1a1a;transform:scaleX(1.0124);">Doc soci</span>
<span class="t" style="left:40.67px;top:283px;font-size:12px;color:#1a1a1a;transform:scaleX(0.9143);">This PC</span>
<span class="t" style="left:39.88px;top:316px;font-size:12px;color:#1a1a1a;transform:scaleX(1.0209);">Network</span>
<span class="t" style="left:227.85px;top:113px;font-size:12px;color:#1a1a1a;transform:scaleX(1.0500);">Music</span>
<span class="t" style="left:485.22px;top:113px;font-size:12px;color:#1a1a1a;transform:scaleX(0.9833);">Pictures</span>
<span class="t" style="left:743.50px;top:113px;font-size:12px;color:#1a1a1a;transform:scaleX(0.9583);">Videos</span>
<span class="t" style="left:177.36px;top:154px;font-size:15px;color:#36479a;transform:scaleX(0.9891);-webkit-text-stroke:0;">Devices and drives (8)</span>
<span class="t" style="left:177.32px;top:352px;font-size:15px;color:#36479a;transform:scaleX(1.0238);-webkit-text-stroke:0;">Network locations (18)</span>
<span class="t" style="left:8.31px;top:720px;font-size:12px;color:#3c3c3c;transform:scaleX(0.9865);">32 items</span>
<span class="t" style="left:227.52px;top:181px;font-size:12px;color:#111;transform:scaleX(0.9766);">Local Disk (C:)</span>
<span class="t" style="left:228.04px;top:212px;font-size:12px;color:#6d6d6d;transform:scaleX(0.9296);">68,1 GB free of 126 GB</span>
<span class="t" style="left:484.82px;top:181px;font-size:12px;color:#111;transform:scaleX(0.9843);">Logs (D:)</span>
<span class="t" style="left:485.34px;top:212px;font-size:12px;color:#6d6d6d;transform:scaleX(0.9260);">38,0 GB free of 39,8 GB</span>
<span class="t" style="left:743.26px;top:197px;font-size:12px;color:#111;transform:scaleX(0.9368);">DVD Drive (E:)</span>
<span class="t" style="left:227.51px;top:238px;font-size:12px;color:#111;transform:scaleX(0.9880);">Dati (F:)</span>
<span class="t" style="left:227.56px;top:269px;font-size:12px;color:#6d6d6d;transform:scaleX(0.9353);">121 GB free of 499 GB</span>
<span class="t" style="left:484.84px;top:238px;font-size:12px;color:#111;transform:scaleX(0.9646);">Local Disk (G:)</span>
<span class="t" style="left:485.34px;top:269px;font-size:12px;color:#6d6d6d;transform:scaleX(0.9260);">5,41 GB free of 52,3 GB</span>
<span class="t" style="left:742.11px;top:238px;font-size:12px;color:#111;transform:scaleX(0.9870);">Local Disk (H:)</span>
<span class="t" style="left:742.63px;top:269px;font-size:12px;color:#6d6d6d;transform:scaleX(0.9314);">878 GB free of 878 GB</span>
<span class="t" style="left:227.55px;top:295px;font-size:12px;color:#111;transform:scaleX(0.9532);">DATI_su_QNAP (I:)</span>
<span class="t" style="left:227.56px;top:326px;font-size:12px;color:#6d6d6d;transform:scaleX(0.9353);">152 GB free of 499 GB</span>
<span class="t" style="left:484.87px;top:295px;font-size:12px;color:#111;transform:scaleX(0.9333);">DB (S:)</span>
<span class="t" style="left:485.57px;top:326px;font-size:12px;color:#6d6d6d;transform:scaleX(0.9242);">47,7 GB free of 59,8 GB</span>
<span class="t" style="left:227.54px;top:379px;font-size:12px;color:#111;transform:scaleX(0.9609);">DR (\\192.168.65.72) (A:)</span>
<span class="t" style="left:228.02px;top:410px;font-size:12px;color:#6d6d6d;transform:scaleX(0.9546);">3,11 TB free of 8,85 TB</span>
<span class="t" style="left:485.80px;top:379px;font-size:12px;color:#111;transform:scaleX(0.9749);">ADMIN$ (\\192.168.65.11) (B:)</span>
<span class="t" style="left:485.33px;top:410px;font-size:12px;color:#6d6d6d;transform:scaleX(0.9314);">238 GB free of 278 GB</span>
<span class="t" style="left:742.62px;top:379px;font-size:12px;color:#111;transform:scaleX(0.9530);">C$ (\\192.168.65.11) (J:)</span>
<span class="t" style="left:742.63px;top:410px;font-size:12px;color:#6d6d6d;transform:scaleX(0.9314);">238 GB free of 278 GB</span>
<span class="t" style="left:228.50px;top:436px;font-size:12px;color:#111;transform:scaleX(0.9579);">V$ (\\192.168.65.11) (K:)</span>
<span class="t" style="left:228.03px;top:467px;font-size:12px;color:#6d6d6d;transform:scaleX(0.9314);">226 GB free of 279 GB</span>
<span class="t" style="left:485.80px;top:436px;font-size:12px;color:#111;transform:scaleX(0.9630);">W$ (\\192.168.65.11) (L:)</span>
<span class="t" style="left:485.33px;top:467px;font-size:12px;color:#6d6d6d;transform:scaleX(0.9314);">910 GB free of 931 GB</span>
<span class="t" style="left:742.86px;top:436px;font-size:12px;color:#111;transform:scaleX(0.9754);">X$ (\\192.168.65.11) (M:)</span>
<span class="t" style="left:742.63px;top:467px;font-size:12px;color:#6d6d6d;transform:scaleX(0.9314);">238 GB free of 279 GB</span>
<span class="t" style="left:228.25px;top:492px;font-size:12px;color:#111;transform:scaleX(0.9845);">faxclient (\\192.168.65.5) (N:)</span>
<span class="t" style="left:228.27px;top:524px;font-size:12px;color:#6d6d6d;transform:scaleX(0.9258);">4,64 GB free of 13,6 GB</span>
<span class="t" style="left:485.32px;top:492px;font-size:12px;color:#111;transform:scaleX(0.9612);">C$ (\\192.168.65.10) (O:)</span>
<span class="t" style="left:484.86px;top:524px;font-size:12px;color:#6d6d6d;transform:scaleX(0.9353);">191 GB free of 278 GB</span>
<span class="t" style="left:742.86px;top:492px;font-size:12px;color:#111;transform:scaleX(0.9597);">Y$ (\\192.168.65.11) (P:)</span>
<span class="t" style="left:742.63px;top:524px;font-size:12px;color:#6d6d6d;transform:scaleX(0.9314);">279 GB free of 279 GB</span>
<span class="t" style="left:228.50px;top:549px;font-size:12px;color:#111;transform:scaleX(0.9694);">Address (\\192.168.65.5) (Q:)</span>
<span class="t" style="left:228.27px;top:581px;font-size:12px;color:#6d6d6d;transform:scaleX(0.9258);">4,64 GB free of 13,6 GB</span>
<span class="t" style="left:485.56px;top:549px;font-size:12px;color:#111;transform:scaleX(0.9566);">Z$ (\\192.168.65.11) (R:)</span>
<span class="t" style="left:484.85px;top:581px;font-size:12px;color:#6d6d6d;transform:scaleX(0.9507);">1,57 TB free of 1,81 TB</span>
<span class="t" style="left:742.86px;top:549px;font-size:12px;color:#111;transform:scaleX(0.9728);">Z$ (\\192.168.65.10) (T:)</span>
<span class="t" style="left:742.15px;top:581px;font-size:12px;color:#6d6d6d;transform:scaleX(0.9507);">1,81 TB free of 1,81 TB</span>
<span class="t" style="left:228.26px;top:606px;font-size:12px;color:#111;transform:scaleX(0.9564);">Y$ (\\192.168.65.10) (U:)</span>
<span class="t" style="left:228.03px;top:638px;font-size:12px;color:#6d6d6d;transform:scaleX(0.9314);">202 GB free of 279 GB</span>
<span class="t" style="left:485.56px;top:606px;font-size:12px;color:#111;transform:scaleX(0.9530);">X$ (\\192.168.65.10) (V:)</span>
<span class="t" style="left:484.86px;top:638px;font-size:12px;color:#6d6d6d;transform:scaleX(0.9353);">178 GB free of 279 GB</span>
<span class="t" style="left:743.10px;top:606px;font-size:12px;color:#111;transform:scaleX(0.9633);">W$ (\\192.168.65.10) (W:)</span>
<span class="t" style="left:742.63px;top:638px;font-size:12px;color:#6d6d6d;transform:scaleX(0.9392);">711 GB free of 931 GB</span>
<span class="t" style="left:228.50px;top:663px;font-size:12px;color:#111;transform:scaleX(0.9704);">ADMIN$ (\\192.168.65.10) (X:)</span>
<span class="t" style="left:227.56px;top:694px;font-size:12px;color:#6d6d6d;transform:scaleX(0.9353);">191 GB free of 278 GB</span>
<span class="t" style="left:485.80px;top:663px;font-size:12px;color:#111;transform:scaleX(0.9530);">V$ (\\192.168.65.10) (Y:)</span>
<span class="t" style="left:484.86px;top:694px;font-size:12px;color:#6d6d6d;transform:scaleX(0.9353);">159 GB free of 279 GB</span>
<span class="t" style="left:742.13px;top:663px;font-size:12px;color:#111;transform:scaleX(0.9664);">DR (\\192.168.65.72) (Z:)</span>
<span class="t" style="left:742.62px;top:694px;font-size:12px;color:#6d6d6d;transform:scaleX(0.9546);">3,11 TB free of 8,85 TB</span>
</div></div>
</body></html>
